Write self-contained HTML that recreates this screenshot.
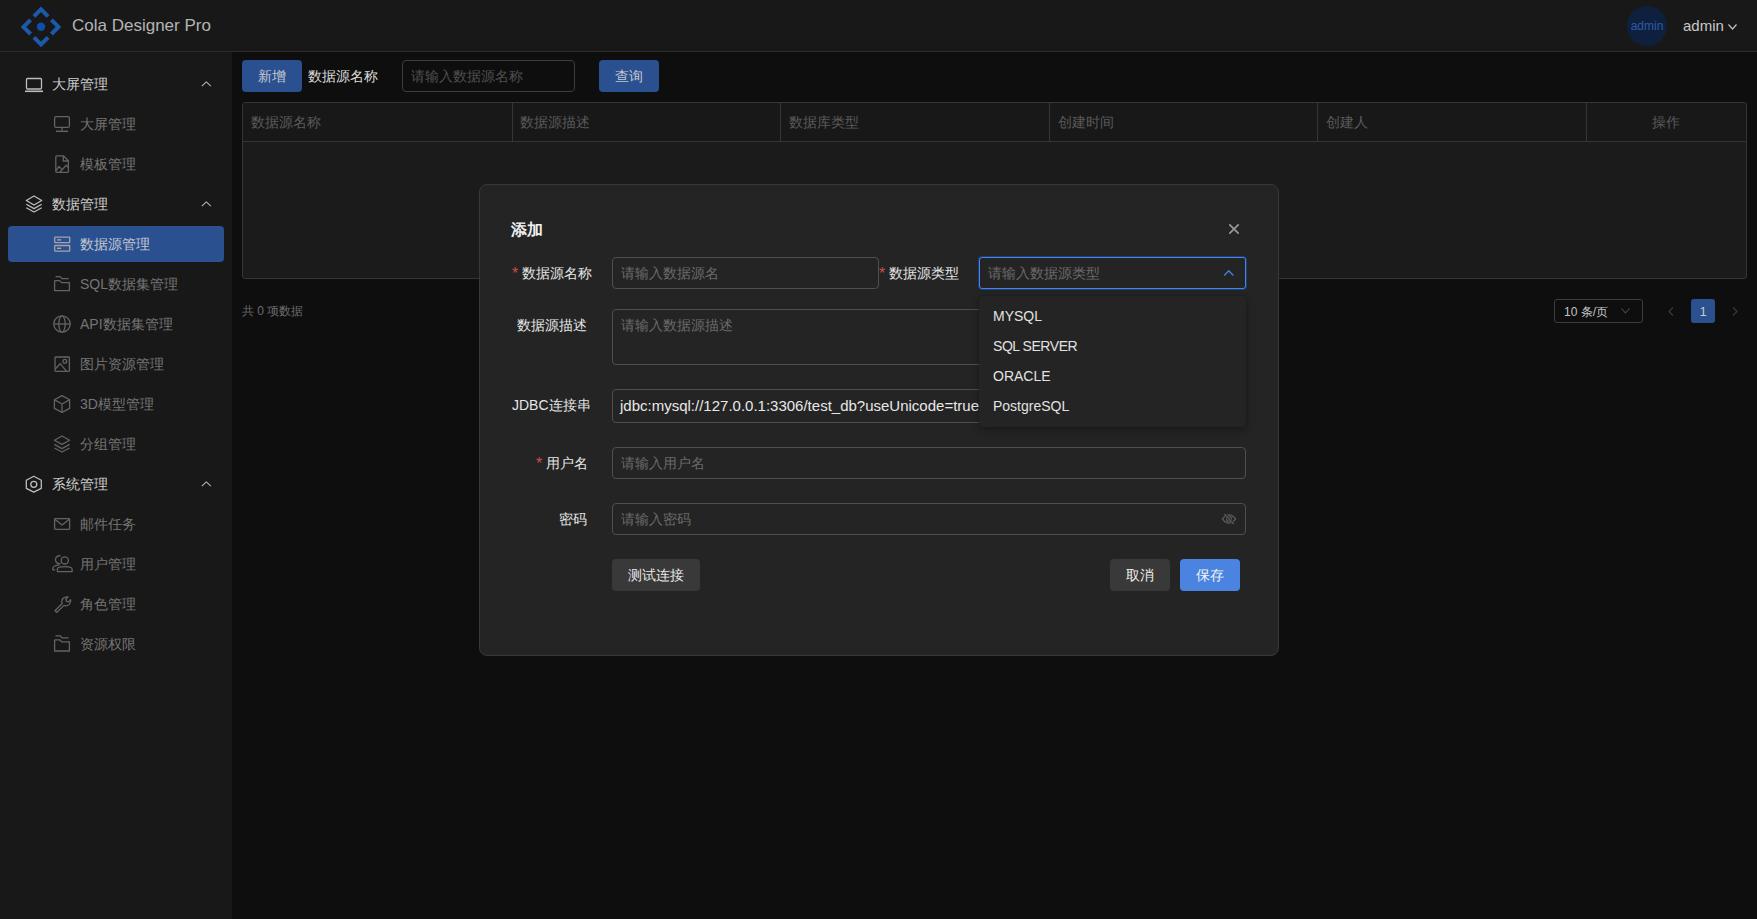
<!DOCTYPE html>
<html><head><meta charset="utf-8">
<style>
*{box-sizing:border-box;margin:0;padding:0}
html,body{width:1757px;height:919px;overflow:hidden;background:#0e0e0e;font-family:"Liberation Sans",sans-serif;position:relative}
.a{position:absolute}
.t{position:absolute;white-space:nowrap;line-height:1}
#hdr{left:0;top:0;width:1757px;height:51px;background:#181818}
#hdrb{left:0;top:51px;width:1757px;height:1px;background:#2c2c2c}
#side{left:0;top:52px;width:232px;height:867px;background:#181818}
#rstrip{left:1747px;top:52px;width:10px;height:867px;background:#111}
.mi{color:#cfcfcf;font-size:14px}
.si{color:#757575;font-size:14px}
svg{position:absolute;overflow:visible}
.btnb{background:#2b5090;border-radius:4px;color:#c4c8d0;font-size:14px;text-align:center}
.tbl{left:242px;top:102px;width:1505px;height:177px;border:1px solid #353535;border-radius:3px;background:#1b1b1b;overflow:hidden}
.th{color:#5a5a5a;font-size:14px}
#modal{left:479px;top:184px;width:800px;height:472px;background:#242424;border:1px solid #383838;border-radius:8px}
.lbl{color:#e6e6e6;font-size:14px}
.req{color:#d04a4a;font-size:16px;line-height:1}
.inp{border:1px solid #4f4f4f;border-radius:4px;background:#242424}
.ph{color:#6a6a6a;font-size:14px}
</style></head><body>
<div id="hdr" class="a"></div>
<div id="hdrb" class="a"></div>
<div id="side" class="a"></div>

<!-- logo -->
<svg style="left:0;top:0" width="90" height="51" viewBox="0 0 90 51">
  <g fill="none" stroke="#1a5aa8" stroke-width="4" stroke-linecap="butt">
    <polyline points="33.9,16.4 41,9.3 48.1,16.4"/>
    <polyline points="33.9,37.4 41,44.5 48.1,37.4"/>
    <polyline points="30.6,19.8 23.5,26.9 30.6,34"/>
    <polyline points="51.4,19.8 58.5,26.9 51.4,34"/>
  </g>
  <circle cx="41" cy="26.8" r="4.2" fill="#0d4ea6"/>
</svg>
<div class="t" style="left:72px;top:17px;font-size:17px;color:#b4b4b4">Cola Designer Pro</div>

<!-- avatar -->
<div class="a" style="left:1627px;top:6px;width:40px;height:40px;border-radius:50%;background:#0f203f"></div>
<div class="t" style="left:1627px;top:20px;width:40px;text-align:center;font-size:12px;color:#2d5aa6">admin</div>
<div class="t" style="left:1683px;top:18px;font-size:15px;color:#c8c8c8">admin</div>
<svg style="left:1728px;top:24px" width="10" height="6"><polyline points="0.5,0.5 4.5,5 8.5,0.5" fill="none" stroke="#c0c0c0" stroke-width="1.2"/></svg>

<!-- content toolbar -->
<div class="a btnb" style="left:242px;top:60px;width:60px;height:32px;line-height:32px">新增</div>
<div class="t" style="left:308px;top:69px;font-size:14px;color:#dcdcdc">数据源名称</div>
<div class="a" style="left:402px;top:60px;width:173px;height:32px;border:1px solid #3c3c3c;border-radius:4px;background:#0e0e0e"></div>
<div class="t" style="left:411px;top:69px;font-size:14px;color:#4e4e4e">请输入数据源名称</div>
<div class="a btnb" style="left:599px;top:60px;width:60px;height:32px;line-height:32px">查询</div>

<!-- table -->
<div class="a tbl">
  <div class="a" style="left:0;top:0;width:1505px;height:39px;background:#181818;border-bottom:1px solid #353535"></div>
  <div class="a" style="left:269px;top:0;width:1px;height:39px;background:#353535"></div>
  <div class="a" style="left:537px;top:0;width:1px;height:39px;background:#353535"></div>
  <div class="a" style="left:806px;top:0;width:1px;height:39px;background:#353535"></div>
  <div class="a" style="left:1074px;top:0;width:1px;height:39px;background:#353535"></div>
  <div class="a" style="left:1343px;top:0;width:1px;height:39px;background:#353535"></div>
  <div class="t th" style="left:8px;top:12px">数据源名称</div>
  <div class="t th" style="left:277px;top:12px">数据源描述</div>
  <div class="t th" style="left:546px;top:12px">数据库类型</div>
  <div class="t th" style="left:815px;top:12px">创建时间</div>
  <div class="t th" style="left:1083px;top:12px">创建人</div>
  <div class="t th" style="left:1409px;top:12px">操作</div>
</div>
<div class="t" style="left:242px;top:305px;font-size:12px;color:#6a6a6a">共 0 项数据</div>

<!-- pagination -->
<div class="a" style="left:1554px;top:299px;width:89px;height:24px;border:1px solid #3c3c3c;border-radius:3px"></div>
<div class="t" style="left:1564px;top:306px;font-size:12px;color:#c4c4c4">10 条/页</div>
<svg style="left:1621px;top:308px" width="10" height="6"><polyline points="0.5,0.5 4.5,5 8.5,0.5" fill="none" stroke="#4c4c4c" stroke-width="1.1"/></svg>
<svg style="left:1668px;top:307px" width="6" height="9"><polyline points="5,0.5 1,4.5 5,8.5" fill="none" stroke="#3a3a3a" stroke-width="1.2"/></svg>
<div class="a" style="left:1691px;top:299px;width:24px;height:24px;border-radius:3px;background:#2b5090;color:#c8c8c8;font-size:13px;text-align:center;line-height:25px">1</div>
<svg style="left:1732px;top:307px" width="6" height="9"><polyline points="1,0.5 5,4.5 1,8.5" fill="none" stroke="#3a3a3a" stroke-width="1.2"/></svg>

<!-- SIDEBAR ITEMS -->
<div class="a" style="left:8px;top:226px;width:216px;height:36px;border-radius:4px;background:#2b5090"></div>
<svg style="left:0;top:0" width="232" height="700" viewBox="0 0 232 700">
 <g fill="none" stroke="#bdbdbd" stroke-width="1.3" stroke-linejoin="round">
  <!-- laptop -->
  <rect x="26.5" y="78.5" width="15" height="10.5" rx="1"/>
  <line x1="25" y1="91.3" x2="43" y2="91.3" stroke-width="1.6"/>
  <!-- layers group -->
  <path d="M26.3,200.5 L34,196 L41.7,200.5 L34,205 Z"/>
  <path d="M26.3,204.3 L34,208.6 L41.7,204.3"/>
  <path d="M26.3,207.8 L34,212 L41.7,207.8"/>
  <!-- hexagon settings -->
  <path d="M33.8,476.3 L41.3,480.3 L41.3,488.3 L33.8,492.2 L26.3,488.3 L26.3,480.3 Z"/>
  <circle cx="33.8" cy="484.3" r="3"/>
  <!-- chevrons -->
  <path d="M201.8,206.2 L206.3,201.8 L210.8,206.2" stroke="#b0b0b0" stroke-width="1.1"/>
  <path d="M201.8,86.2 L206.3,81.8 L210.8,86.2" stroke="#b0b0b0" stroke-width="1.1"/>
  <path d="M201.8,486.2 L206.3,481.8 L210.8,486.2" stroke="#b0b0b0" stroke-width="1.1"/>
 </g>
 <g fill="none" stroke="#636363" stroke-width="1.3" stroke-linejoin="round">
  <!-- desktop -->
  <rect x="54.6" y="116.6" width="14.8" height="10.8" rx="1.5"/>
  <line x1="62" y1="127.5" x2="62" y2="130.5"/>
  <line x1="56" y1="131.3" x2="68" y2="131.3" stroke-width="1.5"/>
  <!-- file image -->
  <path d="M63.3,155.8 L56.8,155.8 Q55.8,155.8 55.8,156.8 L55.8,171.6 Q55.8,172.4 56.8,172.4 L67.6,172.4 Q68.4,172.4 68.4,171.6 L68.4,160.8 Z"/>
  <path d="M63.3,155.8 L63.3,161 L68.4,161"/>
  <path d="M56,170.5 L59,166.5 L61.4,169"/>
  <path d="M59.8,172.2 L66.2,165.3 L68.3,167.6"/>
  <!-- folder SQL -->
  <path d="M55.5,276.6 L60,276.6 L62,278.6 L68.6,278.6"/>
  <path d="M54.6,281.2 Q54.6,280.6 55.3,280.6 L59.6,280.6 L61.6,282.6 L69.4,282.6 L69.4,290.6 L54.6,290.6 Z"/>
  <!-- globe -->
  <circle cx="62" cy="324" r="8.2"/>
  <ellipse cx="62" cy="324" rx="3.2" ry="8.2"/>
  <line x1="53.8" y1="324" x2="70.2" y2="324"/>
  <!-- picture -->
  <rect x="55" y="357" width="14.4" height="14.4" rx="0.8"/>
  <path d="M55.2,369 L60.2,363.7 L66.4,371.2"/>
  <circle cx="64.8" cy="361.2" r="1.9"/>
  <!-- cube -->
  <path d="M62,395.6 L69.6,399.8 L69.6,408.4 L62,412.4 L54.4,408.4 L54.4,399.8 Z"/>
  <path d="M54.6,399.9 L62,404 L69.4,399.9 M62,404 L62,412.2"/>
  <!-- layers -->
  <path d="M54.4,440.2 L62,436 L69.6,440.2 L62,444.4 Z"/>
  <path d="M54.4,444.4 L62,448.6 L69.6,444.4"/>
  <path d="M54.4,448 L62,452 L69.6,448"/>
  <!-- mail -->
  <rect x="54.6" y="518.6" width="15" height="10.8" rx="0.8"/>
  <path d="M54.8,519.2 L62.1,525 L69.4,519.2"/>
  <!-- user -->
  <circle cx="64.8" cy="560.4" r="3.6"/>
  <path d="M57.3,571.6 L57.3,569.2 Q57.3,566.6 64.7,566.6 Q72.1,566.6 72.1,569.2 L72.1,571.6 Z"/>
  <path d="M60.6,556 A3.9,3.9 0 1 0 60.6,563.4"/>
  <path d="M59.6,564.8 Q52.8,565.4 52.8,568.4 L52.8,569.8 L55.2,569.8"/>
  <!-- wrench -->
  <path d="M55,610.7 L62.2,603.5 Q61,600.5 63.2,598.3 Q65.4,596.3 68,597 L65.8,599.3 L66.4,601.3 L68.4,601.9 L70.6,599.6 Q71.2,602.3 69.3,604.4 Q67,606.6 64,605.4 L56.8,612.4 Z"/>
  <!-- folder 2 -->
  <path d="M55.5,635.8 L60,635.8 L62,637.8 L68.6,637.8"/>
  <path d="M54.6,640.4 Q54.6,639.8 55.3,639.8 L59.6,639.8 L61.6,641.8 L69.4,641.8 L69.4,651 L54.6,651 Z"/>
 </g>
 <!-- database (active) -->
 <g fill="none" stroke="#a4a4aa" stroke-width="1.3">
  <rect x="54.7" y="237.1" width="15" height="5.6" rx="0.6"/>
  <rect x="54.7" y="245.5" width="15" height="5.6" rx="0.6"/>
  <line x1="57" y1="239.9" x2="61.2" y2="239.9" stroke-width="1.4"/>
  <line x1="57" y1="248.3" x2="61.2" y2="248.3" stroke-width="1.4"/>
 </g>
</svg>
<div class="t mi" style="left:52px;top:77px">大屏管理</div>
<div class="t si" style="left:80px;top:117px">大屏管理</div>
<div class="t si" style="left:80px;top:157px">模板管理</div>
<div class="t mi" style="left:52px;top:197px">数据管理</div>
<div class="t" style="left:80px;top:237px;font-size:14px;color:#c4c8d0">数据源管理</div>
<div class="t si" style="left:80px;top:277px">SQL数据集管理</div>
<div class="t si" style="left:80px;top:317px">API数据集管理</div>
<div class="t si" style="left:80px;top:357px">图片资源管理</div>
<div class="t si" style="left:80px;top:397px">3D模型管理</div>
<div class="t si" style="left:80px;top:437px">分组管理</div>
<div class="t mi" style="left:52px;top:477px">系统管理</div>
<div class="t si" style="left:80px;top:517px">邮件任务</div>
<div class="t si" style="left:80px;top:557px">用户管理</div>
<div class="t si" style="left:80px;top:597px">角色管理</div>
<div class="t si" style="left:80px;top:637px">资源权限</div>

<!-- MODAL -->
<div id="modal" class="a"></div>
<div class="t" style="left:511px;top:222px;font-size:16px;font-weight:bold;color:#f0f0f0">添加</div>
<svg style="left:1228px;top:223px" width="12" height="12"><path d="M1.8,1.8 L10.2,10.2 M10.2,1.8 L1.8,10.2" stroke="#999" stroke-width="1.7" stroke-linecap="round" fill="none"/></svg>

<div class="t req" style="left:512px;top:266px">*</div>
<div class="t lbl" style="left:522px;top:266px">数据源名称</div>
<div class="a inp" style="left:612px;top:257px;width:267px;height:32px"></div>
<div class="t ph" style="left:621px;top:266px">请输入数据源名</div>

<div class="t req" style="left:879px;top:266px">*</div>
<div class="t lbl" style="left:889px;top:266px">数据源类型</div>
<div class="a" style="left:979px;top:257px;width:267px;height:32px;border:1px solid #4585ea;border-radius:3px;box-shadow:0 0 0 1px #1d3d7a"></div>
<div class="t ph" style="left:988px;top:266px">请输入数据源类型</div>
<svg style="left:1223px;top:269px" width="12" height="8"><path d="M1.2,6.5 L5.8,1.8 L10.4,6.5" stroke="#3f7fe6" stroke-width="1.4" fill="none"/></svg>

<div class="t lbl" style="left:517px;top:318px">数据源描述</div>
<div class="a inp" style="left:612px;top:309px;width:634px;height:56px"></div>
<div class="t ph" style="left:621px;top:318px">请输入数据源描述</div>

<div class="t lbl" style="left:512px;top:398px">JDBC连接串</div>
<div class="a inp" style="left:612px;top:389px;width:634px;height:34px;overflow:hidden"><div class="t" style="left:7px;top:8px;font-size:15px;color:#e8e8e8">jdbc:mysql://127.0.0.1:3306/test_db?useUnicode=true&amp;characterEncoding=utf-8</div></div>

<div class="t req" style="left:536px;top:456px">*</div>
<div class="t lbl" style="left:546px;top:456px">用户名</div>
<div class="a inp" style="left:612px;top:447px;width:634px;height:32px"></div>
<div class="t ph" style="left:621px;top:456px">请输入用户名</div>

<div class="t lbl" style="left:559px;top:512px">密码</div>
<div class="a inp" style="left:612px;top:503px;width:634px;height:32px"></div>
<div class="t ph" style="left:621px;top:512px">请输入密码</div>
<svg style="left:1221px;top:512px" width="16" height="14" viewBox="0 0 16 14"><g fill="none" stroke-width="1.2"><path d="M1.4,7 Q8,-1.2 14.6,7 Q8,15.2 1.4,7 Z" stroke="#5c5c5c"/><circle cx="8" cy="7" r="2.4" stroke="#5c5c5c"/><line x1="3.6" y1="2.4" x2="12.6" y2="11.6" stroke="#242424" stroke-width="2.6"/><line x1="3.2" y1="2" x2="12.8" y2="12" stroke="#5c5c5c"/></g></svg>

<div class="a" style="left:612px;top:559px;width:88px;height:32px;border-radius:4px;background:#393939;color:#e8e8e8;font-size:14px;text-align:center;line-height:32px">测试连接</div>
<div class="a" style="left:1110px;top:559px;width:60px;height:32px;border-radius:4px;background:#393939;color:#f0f0f0;font-size:14px;text-align:center;line-height:32px">取消</div>
<div class="a" style="left:1180px;top:559px;width:60px;height:32px;border-radius:4px;background:#4a83e0;color:#f4f4f4;font-size:14px;text-align:center;line-height:32px">保存</div>

<div class="a" style="left:979px;top:296px;width:267px;height:131px;border-radius:4px;background:#242424;box-shadow:0 3px 10px rgba(0,0,0,0.3),0 0 2px rgba(0,0,0,0.2)"></div>
<div class="t" style="left:993px;top:309px;font-size:14px;color:#e2e2e2">MYSQL</div>
<div class="t" style="left:993px;top:339px;font-size:14px;color:#e2e2e2;letter-spacing:-0.45px">SQL SERVER</div>
<div class="t" style="left:993px;top:369px;font-size:14px;color:#e2e2e2">ORACLE</div>
<div class="t" style="left:993px;top:399px;font-size:14px;color:#e2e2e2">PostgreSQL</div>

</body></html>
